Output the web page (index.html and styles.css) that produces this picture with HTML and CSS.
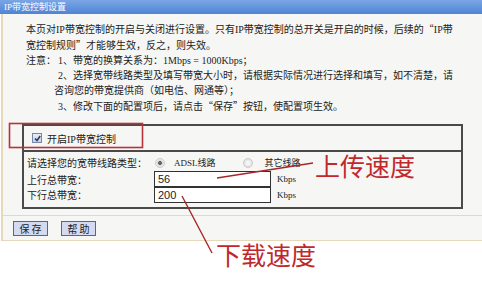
FILE: index.html
```html
<!DOCTYPE html>
<html lang="zh-CN">
<head>
  <meta charset="UTF-8">
  <meta name="viewport" content="width=device-width, initial-scale=1.0">
  <title>IP带宽控制设置</title>
  <link rel="stylesheet" href="styles.css">
</head>
<body>
  <div class="title">IP带宽控制设置</div>

  <div class="panel">
    <div class="intro">
      <p>本页对IP带宽控制的开启与关闭进行设置。只有IP带宽控制的总开关是开启的时候，后续的<span class="q">“</span>IP带</p>
      <p>宽控制规则<span class="q">”</span>才能够生效，反之，则失效。</p>
      <div class="note">
        <span class="note-label">注意：</span>
        <div class="note-items">
          <p>1、带宽的换算关系为：1Mbps = 1000Kbps；</p>
          <p>2、选择宽带线路类型及填写带宽大小时，请根据实际情况进行选择和填写，如不清楚，请</p>
          <p class="wrap">咨询您的带宽提供商（如电信、网通等）；</p>
          <p>3、修改下面的配置项后，请点击<span class="q">“</span>保存<span class="q">”</span>按钮，使配置项生效。</p>
        </div>
      </div>
    </div>

    <div class="box">
      <div class="box-head">
        <span class="check"><svg width="7" height="7" viewBox="0 0 7 7"><path d="M1 3.5 L3 5.5 L6.2 1" fill="none" stroke="#2a3a66" stroke-width="1.6"/></svg></span>
        <span>开启IP带宽控制</span>
      </div>
      <div class="box-body">
        <span class="label">请选择您的宽带线路类型：</span>
        <div class="radios">
          <span class="radio on"></span><span class="radio-text">ADSL线路</span>
          <span class="radio"></span><span class="radio-text">其它线路</span>
        </div>
        <span class="label">上行总带宽：</span>
        <div class="field"><span class="input">56</span><span class="unit">Kbps</span></div>
        <span class="label">下行总带宽：</span>
        <div class="field"><span class="input">200</span><span class="unit">Kbps</span></div>
      </div>
    </div>

    <div class="actions">
      <button class="btn">保 存</button>
      <button class="btn">帮 助</button>
    </div>
  </div>

  <!-- annotations drawn over the screenshot -->
  <svg class="marks" width="482" height="287" viewBox="0 0 482 287">
    <rect x="9.5" y="123.5" width="133" height="24" fill="none" stroke="#b8333a" stroke-width="1.6"/>
    <path d="M217 178 L313 163" stroke="#a8262a" stroke-width="1.4" fill="none"/>
    <path d="M182 196 L212 253" stroke="#a8262a" stroke-width="1.4" fill="none"/>
  </svg>
  <span class="note-red up">上传速度</span>
  <span class="note-red down">下载速度</span>
</body>
</html>
```

FILE: styles.css
```css
body{
  margin: 0;
  background: #fff;
  font-family: "Liberation Serif", "Noto Sans CJK SC", serif;
  font-size: 10px;
  color: #222;
  position: relative;
  width: 482px;
  height: 287px;
  overflow: hidden;
}
p{
  margin: 0;
}
.q{
  font-family: "Noto Sans CJK SC", sans-serif;
}
.title{
  height: 14px;
  line-height: 14px;
  padding-left: 4px;
  color: #fff;
  font-size: 9px;
  background: linear-gradient(#7aa6e6, #4f84d4);
}
.panel{
  margin-left: 1px;
  border-left: 2px solid #e6d8ba;
  border-bottom: 1px solid #e6d8ba;
  background: #f6f6f4;
}
.intro{
  padding: 7px 0 0 23px;
  line-height: 15px;
}
.note{
  display: flex;
}
.note-label{
  width: 32px;
}
.note-items .wrap{
  margin-left: -4px;
}
.box{
  margin: 10px 19px 0 19px;
  border: 2px solid #4a4a4a;
}
.box-head{
  height: 24px;
  display: flex;
  align-items: center;
  gap: 5px;
  padding-left: 8px;
}
.check{
  width: 8px;
  height: 8px;
  border: 1px solid #7a86a6;
  background: linear-gradient(#e8ecf6, #c8d0e4);
  display: flex;
  align-items: center;
  justify-content: center;
}
.box-body{
  border-top: 2px solid #4a4a4a;
  display: grid;
  grid-template-columns: 127px 1fr;
  grid-template-rows: 17px 16px 15px;
  align-items: center;
  padding: 2px 0 5px 3px;
}
.radios{
  display: flex;
  align-items: center;
}
.radio{
  width: 8px;
  height: 8px;
  border-radius: 50%;
  background: radial-gradient(circle, #666 0 1.6px, #d8d8d8 2.2px, #eee 4px);
  border: 1px solid #ccc;
  margin-left: 1px;
}
.radio:not(.on){
  background: radial-gradient(circle, #f4f4f4 0 2px, #ddd 4px);
  margin-left: 27px;
}
.radio-text{
  margin-left: 9px;
  font-size: 9px;
}
.radio:not(.on) + .radio-text{
  margin-left: 12px;
}
.field{
  display: flex;
  align-items: center;
  height: 100%;
}
.input{
  width: 112px;
  height: 14px;
  line-height: 14px;
  padding-left: 3px;
  background: #fff;
  border: 1px solid #333;
  font-family: "Liberation Sans", sans-serif;
  font-size: 11px;
}
.unit{
  margin-left: 6px;
  font-size: 9px;
}
.actions{
  margin-top: 6px;
  border-top: 1px solid #e6d8ba;
  padding: 5px 0 4px 10px;
  display: flex;
  gap: 13px;
}
.btn{
  width: 35px;
  height: 15px;
  padding: 0;
  font-family: "Noto Sans CJK SC", sans-serif;
  font-size: 10px;
  line-height: 13px;
  color: #222;
  background: #d4daf0;
  border: 1px solid #666;
}
.marks{
  position: absolute;
  left: 0;
  top: 0;
}
.note-red{
  position: absolute;
  font-family: "Noto Sans CJK SC", sans-serif;
  font-size: 25px;
  line-height: 25px;
  color: #c0282c;
}
.up{
  left: 315px;
  top: 153px;
}
.down{
  left: 216px;
  top: 242px;
}
```
